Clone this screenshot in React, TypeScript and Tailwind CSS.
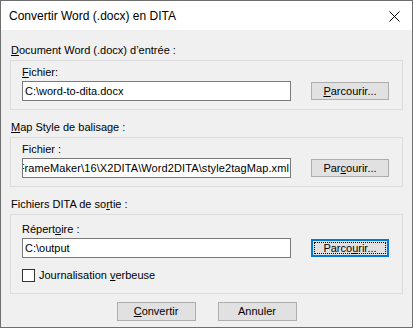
import React from 'react'

const FONT = { fontFamily: '"Liberation Sans", Arial, sans-serif' }

function Btn({ children, focused }: { children: React.ReactNode; focused?: boolean }) {
  if (focused) {
    return (
      <div className="w-[78px] h-[18px] border-2 border-[#0078d7] bg-[#e1e1e1] p-px">
        <div className="h-full w-full border border-dotted border-black flex items-center justify-center text-[11px] leading-none">
          {children}
        </div>
      </div>
    )
  }
  return (
    <div className="w-[78px] h-[18px] border border-[#adadad] bg-[#e1e1e1] flex items-center justify-center text-[11px] leading-none">
      {children}
    </div>
  )
}

function FileRow({ value, scrolled, button }: { value: string; scrolled?: boolean; button: React.ReactNode }) {
  return (
    <div className="flex items-center mt-[2px]">
      <div
        className={
          'w-[269px] h-[20px] border border-[#7a7a7a] bg-white flex items-center overflow-hidden whitespace-nowrap text-[11px] ' +
          (scrolled ? 'justify-end pr-[1px]' : 'pl-[2px]')
        }
      >
        <span className={'shrink-0 ' + (scrolled ? 'tracking-[0.1px]' : '')}>{value}</span>
      </div>
      <div className="ml-[20px]">{button}</div>
    </div>
  )
}

function Group({ children, className }: { children: React.ReactNode; className?: string }) {
  return <div className={'border border-[#dcdcdc] pl-[11px] ' + (className ?? '')}>{children}</div>
}

export default function App() {
  return (
    <div style={FONT} className="w-[413px] h-[328px] border border-[#6e6e6e] bg-[#f0f0f0] text-black flex flex-col">
      <div className="h-[29px] bg-white flex items-center justify-between pl-[8px] pr-[12px]">
        <span className="text-[12px]">Convertir Word (.docx) en DITA</span>
        <svg width="11" height="11" viewBox="0 0 11 11" className="mt-[1px]">
          <path d="M0.5 0.5 L10.5 10.5 M10.5 0.5 L0.5 10.5" stroke="#000" strokeWidth="1" />
        </svg>
      </div>

      <div className="px-[9px] flex flex-col text-[11px] leading-[13px]">
        <div className="mt-[14px] mb-[3px] pl-[1px]">
          <u>D</u>ocument Word (.docx) d’entrée :
        </div>
        <Group className="pt-[5px] pb-[8px]">
          <div><u>F</u>ichier:</div>
          <FileRow value="C:\word-to-dita.docx" button={<Btn><u>P</u>arcourir...</Btn>} />
        </Group>

        <div className="mt-[11px] mb-[3px] pl-[1px]">
          <u>M</u>ap Style de balisage :
        </div>
        <Group className="pt-[5px] pb-[8px]">
          <div>Fichier :</div>
          <FileRow
            value="C:\Program Files\Adobe\Adobe FrameMaker\16\X2DITA\Word2DITA\style2tagMap.xml"
            scrolled
            button={<Btn>Par<u>c</u>ourir...</Btn>}
          />
        </Group>

        <div className="mt-[11px] mb-[3px] pl-[1px]">
          Fichiers DITA de so<u>r</u>tie :
        </div>
        <Group className="pt-[8px] pb-[11px]">
          <div>Répert<u>o</u>ire :</div>
          <FileRow value="C:\output" button={<Btn focused>Parco<u>u</u>rir...</Btn>} />
          <div className="flex items-center mt-[11px]">
            <div className="w-[13px] h-[13px] border border-[#333333] bg-white" />
            <span className="ml-[4px]">Journalisation <u>v</u>erbeuse</span>
          </div>
        </Group>

        <div className="flex justify-center gap-[22px] mt-[8px]">
          <div className="w-[79px] h-[19px] border border-[#adadad] bg-[#e1e1e1] flex items-center justify-center leading-none">
            <span><u>C</u>onvertir</span>
          </div>
          <div className="w-[79px] h-[19px] border border-[#adadad] bg-[#e1e1e1] flex items-center justify-center leading-none">
            <span>Annuler</span>
          </div>
        </div>
      </div>
    </div>
  )
}
